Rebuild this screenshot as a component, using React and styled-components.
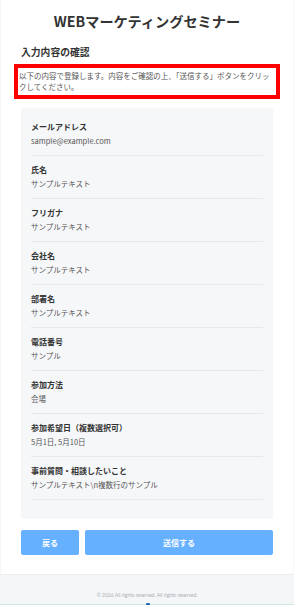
import React from 'react';
import styled, { createGlobalStyle } from 'styled-components';

const items = [
  { label: 'メールアドレス', value: 'sample@example.com' },
  { label: '氏名', value: 'サンプルテキスト' },
  { label: 'フリガナ', value: 'サンプルテキスト' },
  { label: '会社名', value: 'サンプルテキスト' },
  { label: '部署名', value: 'サンプルテキスト' },
  { label: '電話番号', value: 'サンプル' },
  { label: '参加方法', value: '会場' },
  { label: '参加希望日（複数選択可）', value: '5月1日, 5月10日' },
  { label: '事前質問・相談したいこと', value: 'サンプルテキスト\\n複数行のサンプル' },
];

function App() {
  return (
    <>
      <GlobalStyle />
      <Page>
        <Main>
          <Title>WEBマーケティングセミナー</Title>
          <SubTitle>入力内容の確認</SubTitle>
          <Notice>
            以下の内容で登録します。内容をご確認の上、「送信する」ボタンをクリックしてください。
          </Notice>
          <Card>
            {items.map((item) => (
              <Item key={item.label}>
                <Label>{item.label}</Label>
                <Value>{item.value}</Value>
              </Item>
            ))}
          </Card>
          <Buttons>
            <Button $width="58px">戻る</Button>
            <Button>送信する</Button>
          </Buttons>
        </Main>
        <Footer>
          © 2026 All rights reserved. All rights reserved.
          <Dot />
        </Footer>
      </Page>
    </>
  );
}

const GlobalStyle = createGlobalStyle`
  html, body {
    margin: 0;
    padding: 0;
    background: #f5f6f8;
  }
  body {
    font-family: "Noto Sans CJK JP", "Noto Sans", sans-serif;
    color: #333;
  }
  * { box-sizing: border-box; }
`;

const Page = styled.div`
  display: flex;
  flex-direction: column;
  min-height: 605px;
`;

const Main = styled.main`
  background: #fff;
  margin: 0 1px;
  padding: 11px 20px 19px;
  display: flex;
  flex-direction: column;
`;

const Title = styled.h1`
  margin: 0;
  text-align: center;
  font-size: 14.2px;
  line-height: 20px;
  font-weight: 700;
  color: #333;
`;

const SubTitle = styled.h2`
  margin: 14px 0 0;
  font-size: 9.8px;
  line-height: 14px;
  font-weight: 700;
  color: #333;
`;

const Notice = styled.p`
  margin: 5px -7px 0;
  border: 4px solid #ff0000;
  padding: 2px 1px 3px 1px;
  font-size: 7.5px;
  line-height: 11px;
  color: #555;
`;

const Card = styled.section`
  margin-top: 9px;
  background: #f6f7f9;
  border-radius: 2px;
  box-shadow: 0 1px 1px rgba(0, 0, 0, 0.06);
  padding: 5px 10px 17px;
`;

const Item = styled.div`
  padding: 7px 0 8px;
  border-bottom: 1px solid #e6e8eb;
`;

const Label = styled.div`
  font-size: 8px;
  line-height: 13px;
  font-weight: 700;
  color: #333;
`;

const Value = styled.div`
  margin-top: 1px;
  font-size: 7.5px;
  line-height: 13px;
  color: #555;
`;

const Buttons = styled.div`
  margin-top: 13px;
  display: flex;
  gap: 6px;
`;

const Button = styled.button`
  flex: ${(p) => (p.$width ? `0 0 ${p.$width}` : '1')};
  height: 25px;
  border: none;
  border-radius: 2px;
  background: #66b1ff;
  color: #fff;
  font-family: inherit;
  font-size: 8px;
  font-weight: 700;
`;

const Footer = styled.footer`
  position: relative;
  flex: 1;
  background: #f5f6f8;
  border-top: 1px solid #eceef1;
  border-bottom: 2px solid #cde8e1;
  padding: 16px 0 5px;
  text-align: center;
  font-family: "Lato", "Noto Sans", sans-serif;
  font-size: 5px;
  line-height: 8px;
  color: #aab0b6;
`;

const Dot = styled.span`
  position: absolute;
  left: 146px;
  bottom: -2px;
  width: 4px;
  height: 3px;
  border-radius: 1px 1px 0 0;
  background: #1f6db0;
`;

export default App;
